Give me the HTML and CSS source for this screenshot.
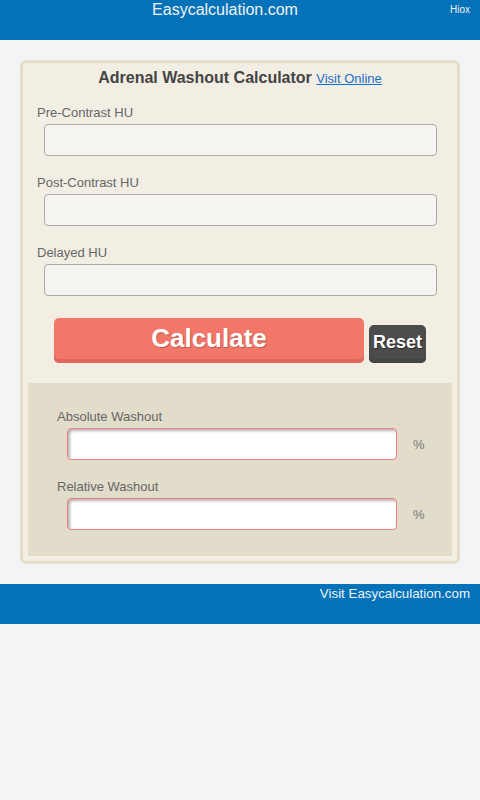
FILE: index.html
```html
<!DOCTYPE html>
<html lang="en">
<head>
    <meta charset="UTF-8">
    <meta name="viewport" content="width=device-width, initial-scale=1.0">
    <title>Adrenal Washout Calculator</title>
    <link rel="stylesheet" href="styles.css">
</head>
<body>
    <div class="top-bar">
        <div class="site-name">Easycalculation.com</div>
        <div class="hiox">Hiox</div>
    </div>

    <div class="calc-box">
        <h1 class="calc-title">Adrenal Washout Calculator <a href="#">Visit Online</a></h1>

        <form class="calc-form">
            <label class="field-label">Pre-Contrast HU</label>
            <input type="text" class="field-input" id="pre-hu">

            <label class="field-label">Post-Contrast HU</label>
            <input type="text" class="field-input" id="post-hu">

            <label class="field-label">Delayed HU</label>
            <input type="text" class="field-input" id="delayed-hu">

            <div class="btn-row">
                <button type="button" class="btn-calc">Calculate</button>
                <button type="reset" class="btn-reset">Reset</button>
            </div>
        </form>

        <!-- Results -->
        <div class="results">
            <label class="field-label">Absolute Washout</label>
            <div class="result-row">
                <input type="text" class="result-input" id="abs-washout" readonly>
                <span class="unit">%</span>
            </div>

            <label class="field-label">Relative Washout</label>
            <div class="result-row">
                <input type="text" class="result-input" id="rel-washout" readonly>
                <span class="unit">%</span>
            </div>
        </div>
    </div>

    <div class="bottom-bar">
        <a href="#">Visit Easycalculation.com</a>
    </div>
</body>
</html>
```

FILE: styles.css
```css
body {
    margin: 0;
    background-color: #f4f3f6;
    font-family: "Liberation Sans", Arial, sans-serif;
}

.top-bar {
    display: flex;
    height: 40px;
    background-color: #0472b8;
    color: #f2f2f2;
}
.site-name {
    flex: 1;
    text-align: center;
    font-size: 16px;
    line-height: 19px;
}
.hiox {
    width: 20px;
    padding-right: 10px;
    text-align: right;
    font-size: 10px;
    line-height: 20px;
}

.calc-box {
    margin: 20px;
    border: 3px solid #e3ddcc;
    border-radius: 6px;
    background-color: #f2eee3;
    padding-bottom: 5px;
}
.calc-title {
    margin: 0;
    padding-top: 5px;
    text-align: center;
    font-size: 16px;
    line-height: 20px;
    color: #444;
}
.calc-title a {
    font-size: 13px;
    font-weight: normal;
    color: #1a6fc9;
}

.calc-form {
    display: flex;
    flex-direction: column;
    padding: 16px 20px 0 14px;
}
.field-label {
    display: block;
    font-size: 13px;
    line-height: 16px;
    color: #666;
}
.field-input {
    height: 32px;
    box-sizing: border-box;
    margin: 3px 0 19px 7px;
    border: 1px solid #aaa;
    border-radius: 4px;
    background-color: #f5f4f1;
}

.btn-row {
    display: flex;
    justify-content: center;
    align-items: flex-end;
    gap: 5px;
    margin: 3px 0 20px 6px;
}
.btn-calc {
    width: 310px;
    height: 45px;
    border: none;
    border-radius: 5px;
    background-color: #f27769;
    box-shadow: inset 0 -4px 0 #dd685b;
    color: #fff;
    font-family: "Liberation Sans", Arial, sans-serif;
    font-size: 26px;
    font-weight: bold;
    padding: 0 0 5px;
    text-shadow: 1px 1px 1px rgba(0, 0, 0, 0.25);
}
.btn-reset {
    width: 57px;
    height: 38px;
    border: none;
    border-radius: 5px;
    background-color: #4c4c4c;
    box-shadow: inset 0 -4px 0 #444;
    color: #fff;
    font-family: "Liberation Sans", Arial, sans-serif;
    font-size: 18px;
    font-weight: bold;
    padding: 0 0 3px;
    text-shadow: 1px 1px 1px rgba(0, 0, 0, 0.5);
}

.results {
    margin: 0 5px;
    padding: 26px 0 7px 29px;
    background-color: #e2dccb;
}
.result-row {
    display: flex;
    align-items: center;
    margin: 3px 0 19px 10px;
}
.result-input {
    width: 330px;
    height: 32px;
    box-sizing: border-box;
    border: 1px solid #f07f80;
    border-radius: 4px;
    background-color: #fff;
    box-shadow: inset 2px 2px 3px rgba(0, 0, 0, 0.3);
}
.unit {
    margin-left: 16px;
    font-size: 13px;
    color: #777;
}

.bottom-bar {
    height: 40px;
    background-color: #0472b8;
    text-align: right;
    padding-right: 10px;
}
.bottom-bar a {
    font-size: 13.33px;
    line-height: 17px;
    color: #eef2f8;
    text-decoration: none;
}
```
